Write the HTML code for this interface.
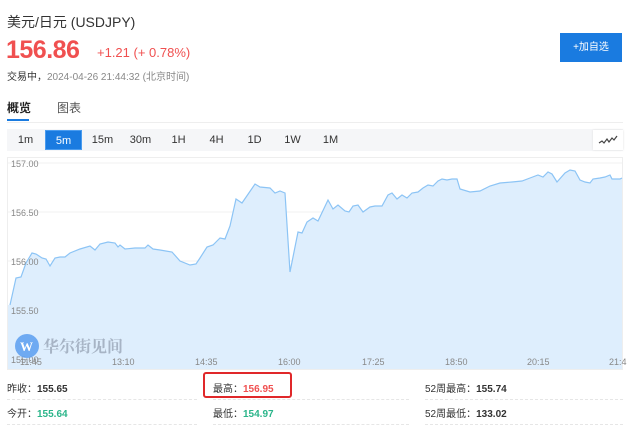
<!DOCTYPE html>
<html><head><meta charset="utf-8"><style>
*{margin:0;padding:0;box-sizing:border-box}
body{width:640px;height:429px;background:#fff;font-family:"Liberation Sans","Noto Sans CJK SC",sans-serif;position:relative;overflow:hidden;color:#333}
.a{position:absolute;white-space:nowrap}
.tb{position:absolute;top:130px;height:20px;font-size:11px;line-height:20px;text-align:center;width:37px;color:#333}
.st{position:absolute;font-size:10px;color:#333}
.st b{font-weight:bold}
.dash{position:absolute;height:0;border-top:1px dashed #e6e6e6}
</style></head><body>
<div class="a" style="left:7px;top:12px;font-size:14px;color:#333">美元/日元 (USDJPY)</div>
<div class="a" style="left:6px;top:36px;font-size:25px;font-weight:bold;color:#f05050;letter-spacing:-0.5px">156.86</div>
<div class="a" style="left:97px;top:45px;font-size:13px;color:#f05050">+1.21 (+ 0.78%)</div>
<div class="a" style="left:7px;top:68px;font-size:10px;color:#333">交易中，<span style="color:#888">2024-04-26 21:44:32 (北京时间)</span></div>
<div class="a" style="left:560px;top:33px;width:62px;height:29px;background:#1a7be0;color:#fff;font-size:10px;line-height:29px;text-align:center">+加自选</div>
<div class="a" style="left:7px;top:99px;font-size:12px;font-weight:bold;color:#222">概览</div>
<div class="a" style="left:57px;top:99px;font-size:12px;color:#555">图表</div>
<div class="a" style="left:7px;top:119px;width:22px;height:2px;background:#1a7be0"></div>
<div class="a" style="left:7px;top:122px;width:616px;height:1px;background:#eee"></div>
<div class="a" style="left:7px;top:129px;width:616px;height:22px;background:#f5f6f8"></div>
<div class="tb" style="left:7px">1m</div>
<div class="tb" style="left:45px;background:#1a7be0;color:#fff;border:1px solid #4a9cef">5m</div>
<div class="tb" style="left:84px">15m</div>
<div class="tb" style="left:122px">30m</div>
<div class="tb" style="left:160px">1H</div>
<div class="tb" style="left:198px">4H</div>
<div class="tb" style="left:236px">1D</div>
<div class="tb" style="left:274px">1W</div>
<div class="tb" style="left:312px">1M</div>
<div class="a" style="left:593px;top:130px;width:30px;height:20px;background:#fff;box-shadow:0 0 2px #ddd"></div>
<svg class="a" style="left:598px;top:134px" width="20" height="12"><path d="M1 9 L4 7 L6 9 L9 5 L11 8 L14 4 L16 6 L19 2" fill="none" stroke="#444" stroke-width="1.2"/></svg>
<div class="a" style="left:7px;top:157px;width:616px;height:213px;border:1px solid #eee"></div>
<svg class="a" style="left:0;top:0" width="640" height="429">
<g stroke="#f0f0f0" stroke-width="1"><line x1="8" y1="163" x2="622" y2="163"/><line x1="8" y1="212" x2="622" y2="212"/><line x1="8" y1="261" x2="622" y2="261"/><line x1="8" y1="310" x2="622" y2="310"/></g>
<path d="M10 305 L16 278 L21 277 L26 263 L32 253 L36 254 L42 258 L46 259 L50 266 L55 258 L60 257 L65 257 L70 253 L80 249 L90 246 L95 250 L100 244 L108 242 L115 243 L118 247 L120 245 L125 249 L135 248 L145 248 L148 245 L153 249 L160 250 L172 252 L180 261 L190 265 L196 264 L200 258 L207 247 L213 245 L220 238 L225 239 L230 226 L236 199 L242 203 L255 184 L260 187 L270 188 L275 193 L280 191 L285 193 L290 272 L298 232 L302 233 L307 222 L313 218 L318 221 L328 200 L333 209 L338 205 L345 211 L349 212 L353 206 L358 205 L363 212 L370 207 L375 206 L382 206 L388 195 L392 193 L397 199 L402 195 L407 198 L412 193 L418 192 L423 188 L428 185 L433 186 L438 181 L442 179 L447 180 L452 179 L457 179 L460 189 L470 192 L480 191 L490 186 L500 183 L512 182 L522 181 L530 178 L538 175 L543 177 L548 172 L552 174 L557 182 L565 173 L570 170 L575 171 L580 180 L585 182 L590 183 L593 179 L600 178 L605 177 L610 175 L612 179 L620 179 L622 178 L622 369 L8 369 L8 305 Z" fill="#deeefd"/>
<path d="M10 305 L16 278 L21 277 L26 263 L32 253 L36 254 L42 258 L46 259 L50 266 L55 258 L60 257 L65 257 L70 253 L80 249 L90 246 L95 250 L100 244 L108 242 L115 243 L118 247 L120 245 L125 249 L135 248 L145 248 L148 245 L153 249 L160 250 L172 252 L180 261 L190 265 L196 264 L200 258 L207 247 L213 245 L220 238 L225 239 L230 226 L236 199 L242 203 L255 184 L260 187 L270 188 L275 193 L280 191 L285 193 L290 272 L298 232 L302 233 L307 222 L313 218 L318 221 L328 200 L333 209 L338 205 L345 211 L349 212 L353 206 L358 205 L363 212 L370 207 L375 206 L382 206 L388 195 L392 193 L397 199 L402 195 L407 198 L412 193 L418 192 L423 188 L428 185 L433 186 L438 181 L442 179 L447 180 L452 179 L457 179 L460 189 L470 192 L480 191 L490 186 L500 183 L512 182 L522 181 L530 178 L538 175 L543 177 L548 172 L552 174 L557 182 L565 173 L570 170 L575 171 L580 180 L585 182 L590 183 L593 179 L600 178 L605 177 L610 175 L612 179 L620 179 L622 178" fill="none" stroke="#8cc4f5" stroke-width="1.2"/>
<g font-size="9" fill="#888" font-family="Liberation Sans,sans-serif"><text x="11" y="167">157.00</text><text x="11" y="216">156.50</text><text x="11" y="265">156.00</text><text x="11" y="314">155.50</text><text x="11" y="363">155.00</text>
<text x="20" y="365">11:45</text><text x="112" y="365">13:10</text><text x="195" y="365">14:35</text><text x="278" y="365">16:00</text><text x="362" y="365">17:25</text><text x="445" y="365">18:50</text><text x="527" y="365">20:15</text><text x="609" y="365">21:4</text></g>
<circle cx="27" cy="346" r="12" fill="#5b9ef0" opacity="0.85"/>
<text x="20" y="351" font-size="13" fill="#fff" font-weight="bold" font-family="Liberation Serif,serif">W</text>
<text x="43" y="352" font-size="16" fill="#9aa6b8" opacity="0.8" font-family="Noto Serif CJK SC,serif" font-weight="bold">华尔街见间</text>
</svg>
<div class="st" style="left:7px;top:380px">昨收：<b>155.65</b></div>
<div class="st" style="left:213px;top:380px">最高：<b style="color:#f05050">156.95</b></div>
<div class="st" style="left:425px;top:380px">52周最高：<b>155.74</b></div>
<div class="st" style="left:7px;top:405px">今开：<b style="color:#2bb58a">155.64</b></div>
<div class="st" style="left:213px;top:405px">最低：<b style="color:#2bb58a">154.97</b></div>
<div class="st" style="left:425px;top:405px">52周最低：<b>133.02</b></div>
<div class="a" style="left:203px;top:372px;width:89px;height:26px;border:2px solid #e0282a;border-radius:3px"></div>
<div class="dash" style="left:7px;top:399px;width:190px"></div>
<div class="dash" style="left:213px;top:399px;width:196px"></div>
<div class="dash" style="left:425px;top:399px;width:198px"></div>
<div class="dash" style="left:7px;top:424px;width:190px"></div>
<div class="dash" style="left:213px;top:424px;width:196px"></div>
<div class="dash" style="left:425px;top:424px;width:198px"></div>
</body></html>
